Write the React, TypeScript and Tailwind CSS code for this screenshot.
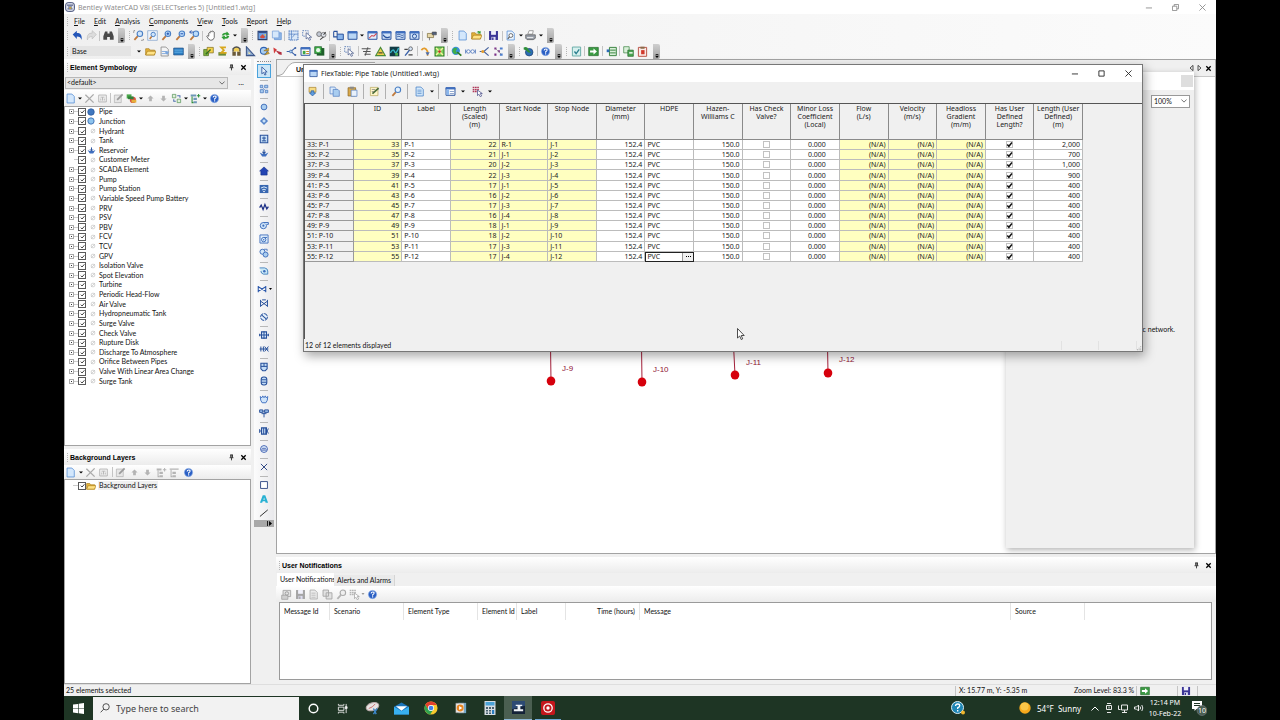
import React, { useState } from "react";
import type { ReactNode } from "react";

const NAVY = "#27509b";
const SKY = "#a9cdf0";
const GREY = "#b4b4b4";

const lens = (fill: string) => (
  <>
    <path d="M2 14.5 7 9" stroke="#c07a3c" strokeWidth="2.6" />
    <circle cx="10" cy="5.5" r="4" fill={fill} stroke="#4a7fc4" strokeWidth="1.6" />
  </>
);
const page = (fill: string, stroke: string) => (
  <path d="M3 1.5h7l3.5 3.5v9.5H3z" fill={fill} stroke={stroke} strokeWidth="1.2" />
);
const folder = (
  <>
    <path d="M1 13V4h5l1.5 2H14v7z" fill="#e6b53c" stroke="#a87b16" />
    <path d="M1 13 3.5 7.5H16L13.5 13z" fill="#ffe285" stroke="#a87b16" />
  </>
);
const disk = (c: string) => (
  <>
    <path d="M1.5 1.5h13v13h-13z" fill={c} />
    <path d="M4.5 1.5h7v5.5h-7z" fill="#f1f1fb" />
    <path d="M5 10h6v4.5H5z" fill="#dcdcf0" />
    <path d="M6 11h2v3.5H6z" fill={c} />
  </>
);
const win = (fill: string) => (
  <>
    <path d="M1.5 2.5h13v11h-13z" fill={fill} stroke={NAVY} strokeWidth="1.4" />
    <path d="M1 2h14v3H1z" fill="#3f6fc0" />
  </>
);

const ICONS: Record<string, ReactNode> = {
  undo: <path d="M1 6.5 7 1v3.5c5 0 8 2.500 7 10-1-3.500-3-5-7-5V13z" fill="#2456b8" />,
  redo: <path d="M15 6.500 9 1v3.500c-5 0-8 2.500-7 10 1-3.500 3-5 7-5V13z" fill="#dcdcdc" stroke="#bdbdbd" />,
  binoculars: (
    <path d="M3 2h3.500v3h3V2H13l2.500 7v5H10v-4H6v4H.5V9z" fill="#4a4a4a" />
  ),
  zoomSel: (
    <>
      {lens("#cfe4fa")}
      <path d="M1 4V1h3M12 15h3v-3" stroke="#555" strokeDasharray="2 1" fill="none" />
    </>
  ),
  zoomWin: (
    <>
      <path d="M1 1h14v14H1z" fill="#eef4fb" stroke="#7d9fc9" />
      <path d="M4 13l3-4" stroke="#c07a3c" strokeWidth="2.200" />
      <circle cx="9" cy="6.500" r="3.200" fill="#cfe4fa" stroke="#4a7fc4" strokeWidth="1.400" />
    </>
  ),
  zoomIn: (
    <>
      {lens("#bcdcfb")}
      <path d="M8 5.500h4M10 3.500v4" stroke="#1f4fae" strokeWidth="1.400" />
    </>
  ),
  zoomOut: (
    <>
      {lens("#bcdcfb")}
      <path d="M8 5.500h4" stroke="#1f4fae" strokeWidth="1.400" />
    </>
  ),
  zoomPrev: (
    <>
      {lens("#bcdcfb")}
      <path d="M1 3h6M3.500.500 1 3l2.500 2.500" stroke="#1f4fae" strokeWidth="1.300" fill="none" />
    </>
  ),
  hand: (
    <path d="M4 9V4.500q1-1.500 2 0V2.500q1-1.500 2 0v-.5q1-1.500 2 0v1q1-1.500 2 0V11q-1 4-5 4-3 0-6-6 1-1.500 3 0z" fill="#fff" stroke="#555" strokeWidth="1.200" />
  ),
  refresh: (
    <>
      <path d="M2.500 7.500Q4 3 9 4l1-2 4 4.500-5.500 2 .5-2Q6 6 5 8.500z" fill="#2f9e35" />
      <path d="M13.500 9Q12 13.500 7 12.500l-1 2-4-4.500 5.500-2-.5 2q3 .5 4-2z" fill="#2f9e35" />
    </>
  ),
  picture: (
    <>
      <path d="M1.500 2h13v12h-13z" fill="#6fa5e6" stroke="#2a3f6c" strokeWidth="1.500" />
      <path d="M2 2h12v2.500H2z" fill="#34508d" />
      <path d="M4 10l4-4 4 4-2 2H6z" fill="#d54d3d" />
      <path d="M10 6h3v3z" fill="#f4c744" />
    </>
  ),
  layers: (
    <>
      <path d="M5 4h10v10H5z" fill="#8fb7e8" stroke="#5f8fd0" />
      <path d="M2 1.500h9.500v10H2z" fill="#d6e8fb" stroke="#6f9ad6" />
    </>
  ),
  grid: (
    <>
      <path d="M1.500 1.500h13v13h-13z" fill="#dbe9f8" stroke="#4f7cc0" strokeDasharray="2 1" strokeWidth="1.500" />
      <path d="M5 1v14M1 6h14M10 6l-4 5" stroke="#4f7cc0" />
    </>
  ),
  selectArrow: (
    <>
      <path d="M1 1h8v8H1z" fill="none" stroke="#5c7fb8" strokeDasharray="2 1.500" strokeWidth="1.400" />
      <path d="M6 4v9l2.500-2 2 4 2-1-2-3.500H14z" fill="#fff" stroke="#3a4d80" />
    </>
  ),
  gauges: (
    <>
      <circle cx="4.500" cy="6" r="3.500" fill="#c3c9d4" stroke="#555" />
      <circle cx="11" cy="7" r="3.500" fill="#dfe3ea" stroke="#555" />
      <path d="M11 7l3-4M6 14l5-4" stroke="#444" strokeWidth="1.500" />
    </>
  ),
  flex: (
    <>
      <path d="M6 6h9v8H6z" fill="#8ab6ec" stroke={NAVY} strokeWidth="1.400" />
      <path d="M1 2h5v4M1 2v8h5" stroke={NAVY} strokeWidth="1.500" fill="none" />
    </>
  ),
  window: win("#b9d6f5"),
  graph: (
    <>
      {win("#e4effb")}
      <path d="M3 12l4-4 3 1 4-4" stroke="#cf3f4a" strokeWidth="1.500" fill="none" />
    </>
  ),
  profile: (
    <>
      {win("#cfe2f8")}
      <path d="M3 7q3 6 10 3" stroke={NAVY} strokeWidth="1.700" fill="none" />
    </>
  ),
  contour: (
    <>
      {win("#cfe2f8")}
      <path d="M3 7q3-2 5 0t5 0M3 10q3-2 5 0t5 0" stroke={NAVY} strokeWidth="1.200" fill="none" />
    </>
  ),
  network: (
    <>
      {win("#cfe2f8")}
      <circle cx="8" cy="9" r="3" fill="none" stroke={NAVY} strokeWidth="1.400" />
    </>
  ),
  sign: (
    <>
      <path d="M2 5h9v6H2z" fill="#e6d7a8" stroke="#7b6a3a" />
      <path d="M5 11v4M9 3h6v4H9z" stroke="#4f4f4f" fill="#50607e" />
    </>
  ),
  newDoc: page("#d3e7fc", "#5e93d6"),
  openFolder: (
    <>
      {folder}
      <path d="M8 4q2-4 5-2l1-1v4h-4l1-1.500Q10 2.500 8 4z" fill="#2f9e35" />
    </>
  ),
  folder,
  save: disk("#3b3596"),
  saveGrey: disk("#a5a5a5"),
  preview: (
    <>
      {page("#eaf4ff", "#5e93d6")}
      <circle cx="8.500" cy="8" r="2.800" fill="#fff" stroke="#555" strokeWidth="1.200" />
      <path d="M6.500 10 4 13" stroke="#555" strokeWidth="1.500" />
    </>
  ),
  printer: (
    <>
      <path d="M4 6l2-5h6l-1 5z" fill="#fff" stroke="#777" />
      <path d="M1 7h14v5l-3 2H3l-2-2z" fill="#9aa0aa" stroke="#555" />
      <path d="M3 11h9" stroke="#e9e9e9" strokeWidth="1.500" />
    </>
  ),
  scenario: (
    <>
      {page("#f4f4f4", "#888")}
      <path d="M4 8h8M4 11h8" stroke="#5e93d6" />
      <path d="M8 8h7l-3 5z" fill="#7aa6dd" />
    </>
  ),
  screen: (
    <>
      <path d="M1 3h14v10H1z" fill="#2b7fc4" stroke="#1b4a82" />
      <path d="M2 6h12M2 9h12" stroke="#7fc1ef" />
    </>
  ),
  multi: (
    <>
      <path d="M1 5h7v9H1z" fill="#7fb23d" stroke="#4a6a1c" />
      <path d="M6 2h9v8H6z" fill="#f5d24d" stroke="#7b6a1a" />
      <path d="M4 12l7-7" stroke="#2f6e22" strokeWidth="2" />
    </>
  ),
  sigma: (
    <>
      <path d="M2 9h11v5H2z" fill="#6a8b3a" />
      <path d="M13 2H6l4 4-4 4h8" stroke="#d8a71d" strokeWidth="2.500" fill="none" />
    </>
  ),
  locks: (
    <>
      <path d="M2 8h5v6H2zM9 8h5v6H9z" fill="#6a5a3a" />
      <path d="M3 8V4q5-5 10 0v4" stroke="#4f4f4f" strokeWidth="2" fill="#f0ce58" />
    </>
  ),
  ruler: (
    <>
      <path d="M2 1v13h12z" fill="#8aa7cf" stroke="#3c5688" strokeWidth="1.500" />
      <path d="M5 8v3.500h3.500z" fill="#f5e9ae" />
    </>
  ),
  pump: (
    <>
      <circle cx="7" cy="7" r="5" fill="#a9cdf0" stroke="#2f63b3" strokeWidth="1.500" />
      <path d="M7 7l7-4v4zM8 13l5-5 2 3z" fill="#e1a82a" stroke="#7c5b12" strokeWidth=".7" />
    </>
  ),
  valve: (
    <>
      <path d="M2 2l5 3-4 6z" fill="#d33c3c" />
      <path d="M5 6l5 2 4 1v4l-4-1z" fill="#b32f3f" />
    </>
  ),
  branch: (
    <>
      <path d="M1 8h6l6-5M7 8l6 5" stroke="#3c63a9" strokeWidth="1.500" fill="none" />
      <circle cx="7" cy="8" r="2" fill={SKY} stroke="#3c63a9" />
      <circle cx="13.500" cy="3" r="1.500" fill="#3c63a9" />
      <circle cx="13.500" cy="13" r="1.500" fill="#3c63a9" />
    </>
  ),
  tableGreen: (
    <>
      {win("#fff")}
      <path d="M4 7h4v5H4z" fill="#3fa646" />
      <path d="M9 8h4M9 11h4" stroke="#c98a2a" strokeWidth="1.500" />
    </>
  ),
  greenBlock: (
    <>
      <path d="M4 3h11v11H4z" fill="#1f5f2a" />
      <path d="M1 1h10v10H1z" fill="#3fae48" stroke="#1f5f2a" />
      <circle cx="6" cy="6" r="3" fill="#e8f7e9" />
    </>
  ),
  slopes: (
    <path d="M1 4h13M3 8h11M5 12h9M10 2l-4 12" stroke="#555" strokeWidth="1.600" fill="none" />
  ),
  triangle: (
    <>
      <path d="M8 2l7 12H1z" fill="#f0cf4b" stroke="#4a8b3a" strokeWidth="1.500" />
      <path d="M5 10h6" stroke="#333" strokeWidth="1.500" />
    </>
  ),
  tile: (
    <>
      <path d="M1 1h14v14H1z" fill="#113b45" />
      <path d="M2 10q4-7 6-2t6-5" stroke="#39b7c9" strokeWidth="2" fill="none" />
      <path d="M9 10h4v4H9z" fill="#4caf50" />
    </>
  ),
  tools: (
    <>
      <path d="M3 14 11 4" stroke="#3c63a9" strokeWidth="2" />
      <circle cx="11" cy="4" r="2.800" fill="#d6e4f6" stroke="#444" />
      <path d="M2 5h5M8 13h6" stroke="#444" strokeWidth="1.800" />
    </>
  ),
  bend: (
    <>
      <path d="M2 6q5-6 9 2v6" stroke="#e39b2a" strokeWidth="2.500" fill="none" />
      <path d="M8 9h6l-3 5z" fill="#4c6fae" />
    </>
  ),
  cross: (
    <>
      <path d="M1.500 1.500h13v13h-13z" fill="#7ccf5a" stroke="#2c7a22" strokeWidth="1.500" />
      <path d="M3 3l10 10M13 3 3 13" stroke="#f7f4a0" strokeWidth="2" />
      <circle cx="8" cy="8" r="2" fill="#c0392b" />
    </>
  ),
  globe: (
    <>
      <circle cx="7" cy="7" r="6" fill="#3a8fd8" />
      <path d="M3 4q4-3 6 0l-2 3 2 4-4 1-3-4z" fill="#3fae48" />
      <path d="M9 9l6 5" stroke="#2c7a22" strokeWidth="2.500" />
    </>
  ),
  chain: (
    <>
      <path d="M1 5v6M15 5v6M1 8h14" stroke="#5a7fc0" strokeWidth="1.500" />
      <circle cx="5" cy="8" r="2.500" fill="#fff" stroke="#5a7fc0" strokeWidth="1.300" />
      <circle cx="11" cy="8" r="2.500" fill="#fff" stroke="#5a7fc0" strokeWidth="1.300" />
    </>
  ),
  fork: (
    <>
      <path d="M14 2 7 8l7 6M1 8h6" stroke="#44609c" strokeWidth="1.700" fill="none" />
      <circle cx="5.500" cy="8" r="2.200" fill="#e39b2a" />
    </>
  ),
  dots: (
    <>
      <path d="M2 2h3v3H2zM2 11h3v3H2zM7 6h3v3H7z" fill="#7a2d86" />
      <path d="M10 2h4v3h-4zM10 11h4v3h-4z" fill="#4c7fd0" />
      <path d="M4 4l8 8" stroke="#888" />
    </>
  ),
  world: (
    <>
      <circle cx="9" cy="9" r="5.500" fill="#2d6db5" stroke="#1d3f6c" />
      <path d="M1 2q5-2 7 3l4 5-5-1Q5 5 1 5z" fill="#2f8e3a" />
    </>
  ),
  help: (
    <>
      <circle cx="8" cy="8" r="6" fill="#2a5fc4" stroke="#8fb0e6" />
      <path d="M6 6.500q0-2.200 2.200-2.200t2.100 1.900Q10.200 7.500 8.200 8.500v1.200M8.200 10.700v1.500" stroke="#fff" strokeWidth="1.600" fill="none" />
    </>
  ),
  checkDoc: (
    <>
      <path d="M2 1.500h12v13H2z" fill="#d6f0ee" stroke="#5fa7a3" strokeWidth="1.300" />
      <path d="M5 8l2.500 3L12 5" stroke="#2d7f8f" strokeWidth="2" fill="none" />
    </>
  ),
  go: (
    <>
      <path d="M1 2h14v12H1z" fill="#3b9a43" stroke="#23692a" />
      <path d="M3 6.500h5V3.500L13 8l-5 4.500v-3H3z" fill="#fff" />
    </>
  ),
  listGreen: (
    <>
      <path d="M5 2h10v12H5z" fill="#d9efd9" stroke="#37823d" strokeWidth="1.400" />
      <path d="M6 6h8M6 10h8" stroke="#37823d" strokeWidth="1.400" />
      <path d="M1 5h4v4H1z" fill="#2b6cb5" />
    </>
  ),
  copyGreen: (
    <>
      <path d="M1 1h8v9H1z" fill="#d9efd9" stroke="#37823d" />
      <path d="M7 6h8v9H7z" fill="#4ba552" stroke="#23692a" />
      <path d="M9 10h5" stroke="#fff" strokeWidth="2" />
    </>
  ),
  clip: (
    <>
      <path d="M2 2h12v13H2z" fill="#fbe9e6" stroke="#b85245" strokeWidth="1.400" />
      <path d="M5 1h6v3H5z" fill="#8b6b4a" />
      <path d="M6 6h5v6H6z" fill="#d0392b" />
    </>
  ),
  del: <path d="M2 2.500 14 14M14 2 2 14" stroke="#ababab" strokeWidth="2" />,
  rename: (
    <path d="M2.500 3h11v10h-11zM5 6h6M8 6v5M5.500 11V8M10.500 11V8" fill="none" stroke="#b5b5b5" strokeWidth="1.400" />
  ),
  editGrey: (
    <>
      <path d="M2 3h10v11H2z" fill="#e6e6e6" stroke="#b0b0b0" />
      <path d="M6 10l8-8" stroke="#9b9b9b" strokeWidth="2.500" />
    </>
  ),
  edit: (
    <>
      <path d="M2 2h11v12H2z" fill="#fff6c9" stroke="#b4a55a" />
      <path d="M5 11l9-8" stroke="#4c6e3a" strokeWidth="2.500" />
      <path d="M4 5h5M4 8h3" stroke="#777" />
    </>
  ),
  symbology: (
    <>
      <path d="M1 2h7v6H1z" fill="#4aa84a" />
      <circle cx="10" cy="10" r="4.500" fill="#d85040" />
      <path d="M8 10h7v4H8z" fill="#e5b13c" />
      <path d="M3 5h8v4H3z" fill="#2f7f3a" />
    </>
  ),
  up: <path d="M8 3.500l4.500 4.500H10v4H6V8H3.500z" fill={GREY} />,
  down: <path d="M8 12.500l4.500-4.500H10V4H6v4H3.500z" fill={GREY} />,
  swap: (
    <>
      <path d="M2 2h5v5H2zM9 9h5v5H9z" fill="#dff0da" stroke="#4f8f52" />
      <path d="M9 4h4v3M7 12H4V9" stroke="#4f6fae" strokeWidth="1.500" fill="none" />
    </>
  ),
  treeAdd: (
    <>
      <path d="M1 2h8v3H1zM5 7h5v3H5zM5 12h5v3H5z" fill="#6f97b8" />
      <path d="M3 5v9h2M10 4h5M12.500 1.500v5" stroke="#2f8e3a" strokeWidth="1.500" fill="none" />
    </>
  ),
  treeAddGrey: (
    <>
      <path d="M1 2h7v3H1zM5 7h5v3H5zM5 12h5v3H5z" fill={GREY} />
      <path d="M3 5v9h2M10 4h5M12.500 1.500v5" stroke={GREY} strokeWidth="1.500" fill="none" />
    </>
  ),
  treeGrey: (
    <>
      <path d="M1 2h13v2H1zM5 7h5v3H5zM5 12h5v3H5z" fill={GREY} />
      <path d="M3 4v10h2" stroke={GREY} strokeWidth="1.500" fill="none" />
    </>
  ),
  exportDown: (
    <>
      <path d="M3 2h10v7H3z" fill="#f6dc85" stroke="#a9802a" />
      <path d="M6 7h4v3h2.500L8 14.500 3.500 10H6z" fill="#5c9ce0" stroke="#2f5f9c" />
    </>
  ),
  copy: (
    <>
      <path d="M1.500 1.500h7l1.500 2v8H1.500z" fill="#dcebfb" stroke="#4f7cc0" />
      <path d="M6 5h7l2 2v8H6z" fill="#a9cdf0" stroke="#4f7cc0" />
    </>
  ),
  paste: (
    <>
      <path d="M1.500 2.500h11v12h-11z" fill="#d9a94a" stroke="#8b6420" />
      <path d="M4 1h6v3H4z" fill="#8a8a8a" />
      <path d="M6 6h8.500v9H6z" fill="#e8f1fb" stroke="#4f7cc0" />
    </>
  ),
  find: lens("#e4f1fd"),
  report: (
    <>
      {page("#d4e9fb", "#4f86c8")}
      <path d="M5 6h6M5 8.500h6M5 11h6" stroke="#4f86c8" />
    </>
  ),
  tableOpt: (
    <>
      {win("#fff")}
      <path d="M2 5h4v8H2z" fill="#8ab6ec" />
      <path d="M7 8h6M7 11h6" stroke="#5c7fb8" />
    </>
  ),
  selRows: (
    <>
      <path d="M1 2h9M1 5h9M1 8h6" stroke="#b03a5b" strokeWidth="2" strokeDasharray="2.500 .8" />
      <path d="M8 6v8l2-2 2 3.500 2-1-2-3.500h3z" fill="#fff" stroke="#3a3f80" />
    </>
  ),
  greyDoc: (
    <>
      {page("#ececec", "#ababab")}
      <path d="M5 6h6M5 9h6M5 12h6" stroke="#ababab" />
    </>
  ),
  greyCopy: (
    <path d="M1.500 1.500h8v9h-8zM6 5.500h8.500v9H6z" fill="#e2e2e2" stroke="#a5a5a5" strokeWidth="1.300" />
  ),
  greyFind: (
    <>
      <path d="M2 14.500 7 9" stroke="#b5b5b5" strokeWidth="2.600" />
      <circle cx="10" cy="5.500" r="4" fill="#efefef" stroke="#aaa" strokeWidth="1.600" />
    </>
  ),
  greySel: (
    <>
      <path d="M1 2h9M1 5h9M1 8h6" stroke="#b5b5b5" strokeWidth="2" strokeDasharray="2.500 .8" />
      <path d="M8 6v8l2-2 2 3.500 2-1-2-3.500h3z" fill="#fff" stroke="#999" />
    </>
  ),
  greyEdit: (
    <>
      <path d="M3 2h11v9H3z" fill="#e2e2e2" stroke="#a5a5a5" strokeWidth="1.300" />
      <path d="M1 9h9v6H1z" fill="#cfcfcf" stroke="#999" />
      <circle cx="8.500" cy="6.500" r="2.500" fill="none" stroke="#999" strokeWidth="1.300" />
    </>
  ),
  pointer: <path d="M4.500 1.500v11l2.800-2.300 2 4.300 2-1-2-4h3.700z" fill="#eaf3fc" stroke={NAVY} strokeWidth="1.300" />,
  layout: (
    <>
      <path d="M2 2h4v4H2zM9 2h5v4H9zM2 9h5v5H2zM10 10h4v4h-4z" fill={SKY} stroke="#4f7cc0" strokeWidth="1.300" />
      <path d="M6 6l4 4" stroke="#4f7cc0" />
    </>
  ),
  junction: <circle cx="8" cy="8" r="4.600" fill={SKY} stroke="#4673bd" strokeWidth="1.600" />,
  hydrant: (
    <>
      <path d="M8 1.500 14.500 8 8 14.500 1.500 8z" fill="#5d8cd0" />
      <circle cx="8" cy="8" r="3.200" fill="#c9e2f8" stroke="#3b68b3" />
    </>
  ),
  tank: (
    <>
      <path d="M2 2h12v12H2z" fill="#c9e2f8" stroke={NAVY} strokeWidth="1.700" />
      <path d="M4.500 11h7M5 6.500h6M8 4v7" stroke={NAVY} strokeWidth="1.600" />
    </>
  ),
  reservoir: (
    <>
      <path d="M1 7l4 2h6l4-2-4 6.500H5z" fill="#3f6fc0" />
      <path d="M8 2.500v6M5.500 6 8 9l2.500-3" stroke={NAVY} strokeWidth="1.700" fill="none" />
    </>
  ),
  meter: <path d="M8 1.500 15 8h-2v6.500H3V8H1z" fill="#2344b4" stroke="#14308c" />,
  scada: (
    <>
      <path d="M1 1.500h14v13H1z" fill="#3867b0" />
      <path d="M3 6.500q5-4 10 0M5 9.500q3-2.500 6 0" stroke="#d9ebfc" strokeWidth="1.600" fill="none" />
      <circle cx="8" cy="12" r="1.300" fill="#fff" />
    </>
  ),
  wave: <path d="M1 9l2.500-4 3 7L9.500 4l3 7L15 7.500" stroke="#1b2f86" strokeWidth="2" fill="none" />,
  pumpBlue: (
    <>
      <circle cx="7" cy="9" r="5" fill="#d2e7fa" stroke="#3d6dbb" strokeWidth="1.500" />
      <path d="M7 4h8v3h-3" fill="#d2e7fa" stroke="#3d6dbb" strokeWidth="1.500" />
      <circle cx="7" cy="9" r="1.700" fill="#3d6dbb" />
    </>
  ),
  pumpBox: (
    <>
      <path d="M1.500 1.500h13v13h-13z" fill="#dfeefc" stroke="#3d6dbb" strokeWidth="1.400" />
      <circle cx="7.500" cy="9" r="3.500" fill="none" stroke="#3d6dbb" strokeWidth="1.500" />
      <path d="M7.500 5.500H13" stroke="#3d6dbb" strokeWidth="1.500" />
      <circle cx="7.500" cy="9" r="1.200" fill="#3d6dbb" />
    </>
  ),
  battery: (
    <>
      <circle cx="5.500" cy="6" r="4" fill="#d2e7fa" stroke="#3d6dbb" strokeWidth="1.500" />
      <circle cx="10.500" cy="10.500" r="4" fill="#a9cdf0" stroke="#3d6dbb" strokeWidth="1.500" />
      <path d="M8 2h5v3" stroke="#3d6dbb" strokeWidth="1.300" fill="none" />
    </>
  ),
  turbine: (
    <>
      <path d="M1 3h8q5 1 5 5v5H7q-4-1-4-5" fill="#c9e8f6" stroke="#3d7dbb" strokeWidth="1.400" />
      <circle cx="8.500" cy="8.500" r="2" fill="#3d6dbb" />
    </>
  ),
  bowtie: <path d="M2 3v10M14 3v10M2 4.500l12 7M14 4.500l-12 7" stroke="#2c59ac" strokeWidth="1.700" fill="none" />,
  isoValve: (
    <>
      <path d="M2.500 3v11M13.500 3v11M2.500 13l11-8M2.500 5l11 8" stroke={NAVY} strokeWidth="1.600" fill="none" />
      <path d="M5 3h6" stroke={NAVY} strokeWidth="1.600" />
    </>
  ),
  checkValve: (
    <>
      <circle cx="8" cy="8" r="5.500" fill="#e4f0fc" stroke={NAVY} strokeWidth="1.600" strokeDasharray="7 1.500" />
      <path d="M4.500 5l7 6" stroke={NAVY} strokeWidth="1.700" />
    </>
  ),
  orifice: (
    <>
      <path d="M4 3h8v10H4z" fill="#d6e8fb" stroke={NAVY} strokeWidth="1.700" />
      <path d="M1 6v4M15 6v4M1 8h14M8 2v12" stroke={NAVY} strokeWidth="1.600" />
    </>
  ),
  twin: <path d="M1 8h14M3 4v8M7 4v8M9 4l6 8M15 4l-6 8" stroke={NAVY} strokeWidth="1.600" fill="none" />,
  surge: (
    <>
      <path d="M3 2h10v9l-3 3H6l-3-3z" fill="#c3dcf6" stroke={NAVY} strokeWidth="1.700" />
      <path d="M3 7h10M8 2v5" stroke={NAVY} strokeWidth="1.600" />
    </>
  ),
  hydro: (
    <>
      <rect x="3.500" y="1.500" width="9" height="13" rx="4" fill="#c3dcf6" stroke={NAVY} strokeWidth="1.700" />
      <path d="M3.500 6h9M3.500 10h9" stroke={NAVY} strokeWidth="1.500" />
    </>
  ),
  air: (
    <path d="M2 4l2.500 2L6 3l2 3 2-3 1.500 3L14 4q0 7-3 10H5Q2 11 2 4z" fill="#cfe4fa" stroke="#3f6fc0" strokeWidth="1.500" />
  ),
  rupture: <path d="M1 3h5v4H1zM9 3h6v4H9zM6 5h3M8 7v8M4 9h8" fill="#9fc2ec" stroke={NAVY} strokeWidth="1.500" />,
  discharge: (
    <>
      <path d="M4 3h8v10H4z" fill="#d6e8fb" stroke={NAVY} strokeWidth="1.700" />
      <path d="M1 5v6M15 4l-2 4 2 4M1 8h3M7 3v10M10 3v10" stroke={NAVY} strokeWidth="1.500" fill="none" />
    </>
  ),
  ring: (
    <>
      <circle cx="8" cy="8" r="5.500" fill="#e4f0fc" stroke="#4060b0" strokeWidth="1.500" />
      <path d="M4 10l2.500-4L8 9l1.500-3 2.500 4z" fill="#fff" stroke="#4060b0" strokeWidth="1.200" />
    </>
  ),
  xMark: <path d="M3 3l10 10M13 3 3 13" stroke="#27407f" strokeWidth="1.500" />,
  box: <path d="M2.500 2.500h11v11h-11z" fill="#fff" stroke="#27407f" strokeWidth="1.400" />,
  textA: <path d="M1.500 14 6 2h4l4.500 12h-4l-.7-2.500H6L5 14zM7 9h2.200L8.200 5.500z" fill="#27b1d3" />,
  line: <path d="M1.500 13.500 14 3" stroke="#333" strokeWidth="1.600" />,
  pin: <path d="M5 2h6M6 2v6M10 2v6M9 2v6M3.500 8.500h9M8 8.500v6" stroke="#111" strokeWidth="1.700" fill="none" />,
  close: <path d="M3 3l10 10M13 3 3 13" stroke="#000" strokeWidth="3" />,
  none: (
    <>
      <circle cx="8" cy="8" r="5" stroke="#b5b5b5" strokeWidth="1.500" />
      <path d="M3 13 13 3" stroke="#b5b5b5" strokeWidth="1.500" />
    </>
  ),
  pipeDot: <circle cx="8" cy="8" r="6.500" fill="#3f77bf" stroke="#2a579c" strokeWidth="1.500" />,
  juncDot: <circle cx="8" cy="8" r="6.300" fill="#8ec4ee" stroke="#3568b0" strokeWidth="1.700" />,
};

type IconProps = { name: string; big?: boolean };
const Icon = ({ name, big }: IconProps) => (
  <svg viewBox="0 0 16 16" fill="none" aria-hidden="true" className={big ? "size-[11px] shrink-0" : "size-[10px] shrink-0"}>
    {ICONS[name]}
  </svg>
);

const Grip = () => (
  <span className="flex w-[6px] shrink-0 flex-col items-center gap-[1px]">
    {[0, 1, 2, 3, 4].map((i) => (
      <span key={i} className="size-[1px] bg-[#b5b5b5]" />
    ))}
  </span>
);
const Caret = () => (
  <svg viewBox="0 0 6 4" aria-hidden="true" className="h-[3px] w-[4px] shrink-0">
    <path d="M0 .5h6L3 3.500z" fill="#000" />
  </svg>
);
const Sep = () => <span className="h-[10px] w-[1px] shrink-0 bg-[#c4c4c4]" />;
const Overflow = () => (
  <button type="button" aria-label="Toolbar options" className="ml-[3px] flex h-[15px] w-[7px] shrink-0 flex-col items-center justify-end rounded-r-[2px] bg-gradient-to-b from-[#cfcfcf] to-[#a2a2a2] pb-[1px]">
    <svg viewBox="0 0 6 6" aria-hidden="true" className="size-[4px]">
      <path d="M1 0h4v1H1zM0 2.500h6L3 6z" fill="#000" />
    </svg>
  </button>
);

const Items = ({ list, fixed }: { list: string; fixed?: boolean }) => (
  <>
    {list.split(" ").map((n, i) => {
      if (n === "|") return <span key={i} className="flex w-[3px] shrink-0 justify-center"><Sep /></span>;
      if (n === "v") return <span key={i} className="flex w-[6px] shrink-0 justify-center"><Caret /></span>;
      if (n === ":") return <Grip key={i} />;
      if (n === ">") return <Overflow key={i} />;
      return (
        <button key={i} type="button" aria-label={n} className={fixed ? "flex w-[13px] shrink-0 items-center justify-center" : "flex min-w-0 flex-1 items-center justify-center"}>
          <Icon name={n} big />
        </button>
      );
    })}
  </>
);

const Check = ({ label, defaultChecked, variant }: { label: string; defaultChecked: boolean; variant: "tree" | "grid" }) => {
  const [on, setOn] = useState(defaultChecked);
  const tree = variant === "tree";
  return (
    <span className="inline-grid shrink-0 place-items-center">
      <input
        type="checkbox"
        aria-label={label}
        checked={on}
        onChange={() => setOn(!on)}
        className={
          tree
            ? "col-start-1 row-start-1 size-[8px] appearance-none border border-[#5a5a5a] bg-white"
            : "col-start-1 row-start-1 size-[7px] appearance-none border border-[#c2c2c2] bg-white"
        }
      />
      {on && (
        <svg viewBox="0 0 8 8" aria-hidden="true" className="pointer-events-none col-start-1 row-start-1 size-[7px]">
          <path d={tree ? "M2 4.200 3.500 5.700 6.200 2.600" : "M1.500 4 3.300 6 6.800 1.800"} fill="none" stroke="#111" strokeWidth={tree ? ".9" : "1.700"} />
        </svg>
      )}
    </span>
  );
};

const TREE: [string, string][] = [
  ["Pipe", "pipeDot"], ["Junction", "juncDot"], ["Hydrant", "none"], ["Tank", "none"], ["Reservoir", "reservoir"],
  ["Customer Meter", "none"], ["SCADA Element", "none"], ["Pump", "none"], ["Pump Station", "none"],
  ["Variable Speed Pump Battery", "none"], ["PRV", "none"], ["PSV", "none"], ["PBV", "none"], ["FCV", "none"],
  ["TCV", "none"], ["GPV", "none"], ["Isolation Valve", "none"], ["Spot Elevation", "none"], ["Turbine", "none"],
  ["Periodic Head-Flow", "none"], ["Air Valve", "none"], ["Hydropneumatic Tank", "none"], ["Surge Valve", "none"],
  ["Check Valve", "none"], ["Rupture Disk", "none"], ["Discharge To Atmosphere", "none"],
  ["Orifice Between Pipes", "none"], ["Valve With Linear Area Change", "none"], ["Surge Tank", "none"],
];

const PIPES: [number, string, number, string, string, string][] = [
  [33, "P-1", 22, "R-1", "J-1", "2,000"], [35, "P-2", 21, "J-1", "J-2", "700"], [37, "P-3", 20, "J-2", "J-3", "1,000"],
  [39, "P-4", 22, "J-3", "J-4", "900"], [41, "P-5", 17, "J-1", "J-5", "400"], [43, "P-6", 16, "J-2", "J-6", "400"],
  [45, "P-7", 17, "J-3", "J-7", "400"], [47, "P-8", 16, "J-4", "J-8", "400"], [49, "P-9", 18, "J-1", "J-9", "400"],
  [51, "P-10", 18, "J-2", "J-10", "400"], [53, "P-11", 17, "J-3", "J-11", "400"], [55, "P-12", 17, "J-4", "J-12", "400"],
];

const HEADS: string[][] = [
  [], ["ID"], ["Label"], ["Length", "(Scaled)", "(m)"], ["Start Node"], ["Stop Node"], ["Diameter", "(mm)"], ["HDPE"],
  ["Hazen-", "Williams C"], ["Has Check", "Valve?"], ["Minor Loss", "Coefficient", "(Local)"], ["Flow", "(L/s)"],
  ["Velocity", "(m/s)"], ["Headloss", "Gradient", "(m/m)"], ["Has User", "Defined", "Length?"], ["Length (User", "Defined)", "(m)"],
];

const PALETTE =
  "pointer | layout | junction hydrant | tank reservoir | meter | scada | wave | pumpBlue pumpBox battery | turbine | bowtie isoValve checkValve | orifice twin | surge hydro | air rupture | discharge | ring | xMark | box textA line";

const PanelHead = ({ title }: { title: string }) => (
  <div className="flex h-[16px] items-center bg-gradient-to-b from-white to-[#ececec] pr-[2px]">
    <Grip />
    <h2 className="font-['Liberation_Sans',Arial,sans-serif] text-[7px] font-bold text-black">{title}</h2>
    <button type="button" aria-label={"Pin " + title} className="ml-auto flex w-[12px] justify-center">
      <svg viewBox="0 0 16 16" aria-hidden="true" className="size-[7px]">{ICONS.pin}</svg>
    </button>
    <button type="button" aria-label={"Close " + title} className="flex w-[12px] justify-center">
      <svg viewBox="0 0 16 16" aria-hidden="true" className="size-[7px]">{ICONS.close}</svg>
    </button>
  </div>
);

const WinButtons = ({ restore, color }: { restore?: boolean; color: string }) => (
  <div className="flex h-full items-center" style={{ color }}>
    <button type="button" aria-label="Minimize" className="flex w-[27px] justify-center">
      <svg viewBox="0 0 8 8" className="size-[7px]" stroke="currentColor" fill="none"><path d="M1 4.500h7" /></svg>
    </button>
    <button type="button" aria-label="Maximize" className="flex w-[27px] justify-center">
      <svg viewBox="0 0 8 8" className="size-[7px]" stroke="currentColor" fill="none">
        {restore ? <path d="M.5 2.500h5v5h-5zM2.500 2.500v-2h5v5h-2" /> : <path d="M1 1h6v6H1z" />}
      </svg>
    </button>
    <button type="button" aria-label="Close" className="flex w-[27px] justify-center">
      <svg viewBox="0 0 8 8" className="size-[7px]" stroke="currentColor" fill="none"><path d="M.5.500l7 7M7.500.500l-7 7" /></svg>
    </button>
  </div>
);

const cell = "overflow-hidden border-r border-b border-[#bcbcbc] px-[2px] whitespace-nowrap leading-[9px]";

const PipeTable = () => (
  <table className="h-[158px] w-[778px] table-fixed border-separate border-spacing-0 font-['Noto_Sans','Open_Sans',sans-serif] text-[7px] leading-[8px] text-[#222]">
    <thead>
      <tr className="h-[36px]">
        {HEADS.map((h, i) => (
          <th key={i} scope="col" className="border-r border-b border-[#8a8a8a] bg-[#f0f0f0] p-0 pt-[1px] text-center align-top font-normal">
            {h.map((t) => (
              <span key={t} className="block whitespace-nowrap">{t}</span>
            ))}
          </th>
        ))}
      </tr>
    </thead>
    <tbody>
      {PIPES.map(([id, label, len, a, b, user], i) => {
        const last = i === PIPES.length - 1;
        return (
          <tr key={id} className="bg-white">
            <th scope="row" className="overflow-hidden border-r border-b border-[#9a9a9a] bg-[#f0f0f0] px-[2px] py-0 text-left leading-[9px] font-normal whitespace-nowrap">{id}: {label}</th>
            <td className={cell + " bg-[#ffffc0] text-right"}>{id}</td>
            <td className={cell}>{label}</td>
            <td className={cell + " bg-[#ffffc0] text-right"}>{len}</td>
            <td className={cell + " bg-[#ffffc0]"}>{a}</td>
            <td className={cell + " bg-[#ffffc0]"}>{b}</td>
            <td className={cell + " text-right"}>152.4</td>
            {last ? (
              <td className="overflow-hidden border border-[#222] p-0 leading-[8px] whitespace-nowrap">
                <div className="flex items-center justify-between pl-[1px]">
                  <span>PVC</span>
                  <button type="button" aria-label="Edit material" className="flex h-[8px] w-[11px] items-center justify-center gap-[1px] border-l border-[#999] bg-[#f0f0f0]">
                    <span className="size-[1px] bg-black" />
                    <span className="size-[1px] bg-black" />
                    <span className="size-[1px] bg-black" />
                  </button>
                </div>
              </td>
            ) : (
              <td className={cell}>PVC</td>
            )}
            <td className={cell + " text-right"}>150.0</td>
            <td className={cell + " text-center"}><span className="flex justify-center"><Check variant="grid" label={label + " has check valve"} defaultChecked={false} /></span></td>
            <td className="overflow-hidden border-r border-b border-[#bcbcbc] py-0 pr-[13px] pl-0 text-right leading-[9px]">0.000</td>
            <td className={cell + " bg-[#ffffc0] text-right"}>(N/A)</td>
            <td className={cell + " bg-[#ffffc0] text-right"}>(N/A)</td>
            <td className={cell + " bg-[#ffffc0] text-right"}>(N/A)</td>
            <td className={cell + " text-center"}><span className="flex justify-center"><Check variant="grid" label={label + " has user defined length"} defaultChecked /></span></td>
            <td className={cell + " text-right"}>{user}</td>
          </tr>
        );
      })}
    </tbody>
  </table>
);

const BarLine = () => <span className="mx-[1px] h-[15px] w-[1px] bg-[#b0b0b0]" />;

const FlexTable = () => (
  <section aria-label="FlexTable" className="absolute top-[64px] right-[73px] left-[239px] flex h-[288px] flex-col border border-[#777] bg-[#f0f0f0] shadow-[2px_4px_10px_rgba(0,0,0,0.35)]">
    <header className="flex h-[17px] shrink-0 items-center bg-white pl-[5px]">
      <svg viewBox="0 0 16 16" aria-hidden="true" className="size-[9px]">{ICONS.window}</svg>
      <h1 className="ml-[3px] font-['Noto_Sans','Open_Sans',sans-serif] text-[7px] text-[#222]">FlexTable: Pipe Table (Untitled1.wtg)</h1>
      <div className="ml-auto h-full"><WinButtons color="#222" /></div>
    </header>
    <div className="flex h-[21px] shrink-0 items-center gap-[3px] pb-[2px] pl-[2px]">
      <Items fixed list="exportDown" />
      <BarLine />
      <span className="flex gap-[5px]"><Items fixed list="copy paste" /></span>
      <BarLine />
      <Items fixed list="edit" />
      <BarLine />
      <Items fixed list="find" />
      <BarLine />
      <span className="flex items-center gap-[4px] pl-[1px]"><Items fixed list="report" /><Caret /></span>
      <BarLine />
      <span className="flex items-center gap-[4px] pl-[1px]"><Items fixed list="tableOpt" /><Caret /></span>
      <span className="flex items-center gap-[4px] pl-[3px]"><Items fixed list="selRows" /><Caret /></span>
    </div>
    <div className="min-h-0 flex-1 overflow-hidden border-t border-l border-[#555]">
      <PipeTable />
    </div>
    <footer className="flex h-[12px] shrink-0 items-center justify-between pl-[1px] text-[#111]">
      <span>12 of 12 elements displayed</span>
      <span className="flex h-full items-center">
        <span className="h-[9px] w-[38px] border-x border-[#e2e2e2]" />
        <span className="h-[9px] w-[38px] border-r border-[#e2e2e2]" />
        <svg viewBox="0 0 6 6" aria-hidden="true" className="size-[5px] self-end"><path d="M4 0h1v1H4zM4 2h1v1H4zM2 2h1v1H2zM4 4h1v1H4zM2 4h1v1H2zM0 4h1v1H0z" fill="#999" /></svg>
      </span>
    </footer>
  </section>
);

const NODES: [number, number, number, number, string][] = [
  [550, 551, 381, 562, "J-9"], [641, 642, 382, 653, "J-10"], [733, 735, 375, 746, "J-11"], [827, 828, 373, 839, "J-12"],
];
const LABEL_Y = [371, 372, 365, 362];

const COLS: [string, string, string][] = [
  ["Message Id", "w-[50px]", "text-left"], ["Scenario", "w-[74px]", "text-left"], ["Element Type", "w-[74px]", "text-left"],
  ["Element Id", "w-[39px]", "text-right"], ["Label", "w-[49px]", "text-left"], ["Time (hours)", "w-[74px]", "text-right"],
  ["Message", "w-[371px]", "text-left"], ["Source", "w-[74px]", "text-left"], ["", "", "text-left"],
];

const App = () => (
  <div className="h-screen overflow-hidden bg-black px-[64px] font-['Lato','Liberation_Sans',sans-serif] text-[7px] leading-[9px] text-[#111]">
    <div className="relative flex h-full flex-col bg-[#f0f0f0]">
      <header className="flex h-[14px] shrink-0 items-center bg-white pl-[1px]">
        <svg viewBox="0 0 16 16" aria-hidden="true" className="size-[10px]">
          <rect x="1" y="1" width="14" height="14" rx="4" fill="#dfe3ee" stroke="#3a4570" strokeWidth="1.500" />
          <path d="M3 5h10M5 8h6M4 11h8" stroke="#3a4570" strokeWidth="1.600" />
          <path d="M7 8h3v3H7z" fill="#c9a53a" />
        </svg>
        <span className="ml-[3px] font-['Noto_Sans','Open_Sans',sans-serif] text-[7px] text-[#8d8d8d]">Bentley WaterCAD V8i (SELECTseries 5) [Untitled1.wtg]</span>
        <div className="ml-auto h-full"><WinButtons restore color="#8a8a8a" /></div>
      </header>

      <nav className="flex h-[14px] shrink-0 items-center gap-[9px] bg-gradient-to-r from-[#f0f0f0] to-[#fbfbfb]">
        <span className="flex items-center gap-[4px]">
          <Grip />
          <button type="button"><span className="underline">F</span>ile</button>
        </span>
        {["Edit", "Analysis", "Components", "View", "Tools", "Report", "Help"].map((m) => (
          <button key={m} type="button">
            <span className="underline">{m[0]}</span>{m.slice(1)}
          </button>
        ))}
      </nav>

      <div className="flex h-[15px] shrink-0 items-center bg-gradient-to-r from-[#f0f0f0] to-[#fbfbfb]">
        <div className="flex w-[61px] items-center"><Items list=": undo redo | binoculars >" /></div>
        <div className="flex w-[123px] items-center pl-[1px]"><Items list=": zoomSel zoomWin zoomIn zoomOut zoomPrev | hand refresh v >" /></div>
        <div className="flex w-[200px] items-center pl-[1px]"><Items list=": picture layers | grid selectArrow gauges | flex window v graph profile contour network | sign >" /></div>
        <div className="flex w-[106px] items-center pl-[1px]"><Items list=": newDoc openFolder | save | preview v printer v >" /></div>
      </div>

      <div className="flex h-[16px] shrink-0 items-center bg-gradient-to-r from-[#f0f0f0] to-[#fbfbfb]">
        <div className="flex w-[131px] items-center">
          <Grip />
          <button type="button" className="flex h-[11px] w-[74px] items-center">
            <span className="flex h-[10px] w-[61px] items-center bg-[#e4e4e4] pl-[2px]">Base</span>
            <span className="ml-[6px] flex"><Caret /></span>
          </button>
          <Items list="folder scenario screen >" />
        </div>
        <div className="flex w-[141px] items-center pl-[1px]"><Items list=": multi sigma locks ruler pump valve branch tableGreen greenBlock >" /></div>
        <div className="flex w-[179px] items-center pl-[1px]"><Items list=": selectArrow | slopes triangle tile tools | bend cross | globe chain fork dots >" /></div>
        <div className="flex w-[47px] items-center pl-[1px]"><Items list=": world | help >" /></div>
        <div className="flex w-[98px] items-center pl-[1px]"><Items list=": checkDoc | go | listGreen | copyGreen clip >" /></div>
      </div>

      <main className="flex min-h-0 flex-1">
        <aside className="flex w-[187px] shrink-0 flex-col">
          <PanelHead title="Element Symbology" />
          <div className="flex h-[15px] items-center justify-between pr-[7px] pl-[1px]">
            <div className="relative flex h-[12px] w-[163px] items-center">
              <select aria-label="Symbology definition" className="h-full w-full appearance-none border border-[#b8b8b8] bg-[#e6e6e6] px-[1px]">
                <option>&lt;default&gt;</option>
              </select>
              <svg viewBox="0 0 8 5" aria-hidden="true" className="pointer-events-none absolute right-[3px] h-[4px] w-[6px]"><path d="M.5.500 4 4 7.500.500" fill="none" stroke="#444" /></svg>
            </div>
            <button type="button" aria-label="Browse definitions" className="text-[8px]">...</button>
          </div>
          <div className="flex h-[16px] items-center bg-gradient-to-b from-white to-[#ececec]">
            <div className="flex w-[157px] items-center">
              <Items list="newDoc v del rename | editGrey symbology v up down swap v treeAdd v help" />
            </div>
          </div>
          <div className="min-h-0 flex-1 border border-[#a3a3a3] bg-white">
            <ul className="grid h-[279px] auto-rows-fr">
              {TREE.map(([label, icon]) => (
                <li key={label} className="flex items-center pl-[4px]">
                  {label === "Customer Meter" ? (
                    <span className="w-[5px]" />
                  ) : (
                    <button type="button" aria-label={"Expand " + label} className="flex size-[5px] shrink-0 items-center justify-center border border-[#aaa]">
                      <span className="size-[1px] bg-[#333]" />
                    </button>
                  )}
                  <span className="h-[1px] w-[4px] shrink-0 bg-[#ccc]" />
                  <Check variant="tree" label={label} defaultChecked />
                  <span className={icon === "none" ? "flex w-[13px] shrink-0 justify-center pl-[1px]" : "flex w-[13px] shrink-0 justify-start pl-[1px]"}>
                    <svg viewBox="0 0 16 16" fill="none" aria-hidden="true" className={icon === "none" ? "size-[6px]" : icon === "reservoir" ? "size-[9px]" : "size-[8px]"}>{ICONS[icon]}</svg>
                  </span>
                  <span className="whitespace-nowrap">{label}</span>
                </li>
              ))}
            </ul>
          </div>
          <div className="mt-[3px]"><PanelHead title="Background Layers" /></div>
          <div className="flex h-[14px] items-center bg-gradient-to-b from-white to-[#ececec]">
            <div className="flex w-[131px] items-center">
              <Items list="newDoc v del rename | editGrey up down treeAddGrey treeGrey help" />
            </div>
          </div>
          <div className="h-[205px] shrink-0 border border-[#a3a3a3] bg-white">
            <div className="flex h-[11px] items-center pl-[8px]">
              <span className="h-[1px] w-[5px] bg-[#ccc]" />
              <Check variant="tree" label="Background Layers" defaultChecked />
              <Icon name="folder" />
              <span className="ml-[2px] bg-[#f0f0f0] px-[1px]">Background Layers</span>
            </div>
          </div>
        </aside>

        <div className="flex w-[25px] shrink-0 flex-col items-end pr-[2px]">
          <div className="flex w-[20px] flex-col items-center bg-gradient-to-r from-[#fcfcfc] to-[#e9e9ec]">
            <span className="my-[2px] h-[1px] w-[14px] border-t border-dotted border-[#8a8a8a]" />
            {PALETTE.split(" ").map((n, i) =>
              n === "|" ? (
                <span key={i} className="flex h-[4px] items-center"><span className="h-[1px] w-[8px] bg-[#b8b8b8]" /></span>
              ) : (
                <button
                  key={i}
                  type="button"
                  aria-label={n}
                  className={n === "pointer" ? "flex h-[14px] w-[14px] items-center justify-center border border-[#4aa3dc] bg-[#cce6f7]" : "flex h-[14px] items-center justify-center gap-[2px]"}
                >
                  <Icon name={n} />
                  {n === "bowtie" && <svg viewBox="0 0 6 4" aria-hidden="true" className="h-[2px] w-[3px]"><path d="M0 0h6L3 4z" fill="#000" /></svg>}
                </button>
              )
            )}
            <button type="button" aria-label="Palette options" className="flex h-[7px] w-[20px] items-center justify-end bg-[#a9a9a9] pr-[2px]">
              <svg viewBox="0 0 6 6" aria-hidden="true" className="size-[5px]"><path d="M0 0h1v6H0zM2.500 0v6L6 3z" fill="#000" /></svg>
            </button>
          </div>
        </div>

        <div className="flex min-w-0 flex-1 flex-col">
          <section aria-label="Drawing" className="flex min-h-0 flex-1 flex-col border border-[#a3a3a3] bg-white">
            <div className="flex h-[17px] items-center justify-between border-b border-[#c8c8c8] bg-[#f0f0f0] pr-[3px]">
              <div className="flex h-full items-end">
                <svg viewBox="0 0 18 14" aria-hidden="true" className="h-[14px] w-[18px]"><path d="M0 14h2q4 0 7-6 4-7.500 9-7.500v14z" fill="#fff" /><path d="M0 13.500h2q4 0 7-6 4-7 9-7" fill="none" stroke="#aaa" /></svg>
                <span className="flex h-[14px] w-[80px] items-center border-t border-[#aaa] bg-white pl-[1px]">
                  <span className="w-[9px] overflow-hidden font-['Liberation_Sans',Arial,sans-serif] font-bold">Un</span>
                </span>
              </div>
              <div className="flex items-center gap-[3px]">
                <button type="button" aria-label="Previous tab"><svg viewBox="0 0 6 8" className="h-[6px] w-[5px]"><path d="M5 .5v7L1 4z" fill="none" stroke="#222" /></svg></button>
                <button type="button" aria-label="Next tab"><svg viewBox="0 0 6 8" className="h-[6px] w-[5px]"><path d="M1 .5v7L5 4z" fill="none" stroke="#222" /></svg></button>
                <button type="button" aria-label="Close tab"><svg viewBox="0 0 16 16" className="size-[7px]">{ICONS.close}</svg></button>
              </div>
            </div>
          </section>
          <section aria-label="Notifications" className="mt-[3px] flex h-[127px] shrink-0 flex-col">
            <PanelHead title="User Notifications" />
            <div className="flex h-[13px] items-end pl-[1px]" role="tablist">
              <button type="button" role="tab" aria-selected="true" className="h-[13px] w-[57px] bg-white px-[3px] text-left whitespace-nowrap">User Notifications</button>
              <button type="button" role="tab" aria-selected="false" className="h-[11px] border-r border-[#d5d5d5] bg-[#eaeaea] px-[3px]">Alerts and Alarms</button>
            </div>
            <div className="flex h-[16px] items-center bg-gradient-to-b from-white to-[#ececec]">
              <div className="flex w-[103px] items-center pl-[4px]">
                <Items list="greyEdit saveGrey greyDoc greyCopy greyFind greySel" />
                <svg viewBox="0 0 6 4" aria-hidden="true" className="h-[2px] w-[4px] shrink-0"><path d="M0 0h6L3 4z" fill="#999" /></svg>
                <Items list="help" />
              </div>
            </div>
            <div className="mr-[4px] ml-[3px] h-[78px] border border-[#9a9a9a] bg-white">
              <table className="w-full table-fixed border-separate border-spacing-0">
                <thead>
                  <tr className="h-[17px]">
                    {COLS.map(([t, w, a], i) => (
                      <th key={i} scope="col" className={w + " " + a + " border-r border-[#e4e4e4] px-[4px] py-0 font-normal whitespace-nowrap last:border-r-0"}>{t}</th>
                    ))}
                  </tr>
                </thead>
              </table>
            </div>
          </section>
        </div>
      </main>

      <footer className="flex h-[12px] shrink-0 items-center border-t border-[#dedede] pl-[2px]">
        <span>25 elements selected</span>
        <span className="ml-auto flex w-[119px] items-center gap-[3px]"><Sep />X: 15.77 m, Y: -5.35 m</span>
        <span className="w-[62px] whitespace-nowrap">Zoom Level: 83.3 %</span>
        <span className="flex w-[41px] items-center gap-[3px]"><Sep /><Icon name="go" /></span>
        <span className="flex w-[20px] items-center gap-[3px]"><Sep /><Icon name="save" /></span>
        <span className="flex w-[19px]"><Sep /></span>
      </footer>

      <div className="flex h-[24px] shrink-0 items-center bg-[#1e3524] font-['Noto_Sans','Open_Sans',sans-serif] text-white">
        <button type="button" aria-label="Start" className="flex w-[29px] justify-center">
          <svg viewBox="0 0 12 12" className="size-[11px]" fill="#fff"><path d="M0 1.700 5.500 1v4.700H0zM6.200.900 12 0v5.700H6.200zM0 6.400h5.500v4.700L0 10.400zM6.200 6.400H12V12l-5.800-.9z" /></svg>
        </button>
        <label className="flex h-[23px] w-[206px] items-center bg-[#f2f2f2] pl-[7px]">
          <svg viewBox="0 0 12 12" aria-hidden="true" className="size-[10px]" fill="none" stroke="#333"><circle cx="7.300" cy="4.600" r="3.800" /><path d="M4.500 7.300.800 11.200" /></svg>
          <input aria-label="Search" placeholder="Type here to search" className="ml-[6px] w-[150px] bg-transparent text-[9px] text-[#333] outline-none placeholder:text-[#444]" />
        </label>
        <div className="flex h-full items-center">
          <button type="button" aria-label="Cortana" className="flex w-[29px] justify-center">
            <svg viewBox="0 0 12 12" className="size-[11px]"><circle cx="6" cy="6" r="4.700" fill="none" stroke="#fff" strokeWidth="1.600" /></svg>
          </button>
          <button type="button" aria-label="Task view" className="flex w-[29px] justify-center">
            <svg viewBox="0 0 12 12" className="size-[11px]" fill="none" stroke="#e8e8e8"><path d="M1.500 1v1.500h6V1M1.500 4.500h6v3.500h-6zM1.500 11.500V10h6v1.500M10 1v10" /><path d="M9 4h2v2H9z" fill="#fff" /></svg>
          </button>
          <button type="button" aria-label="Snipping tool" className="flex w-[30px] justify-center">
            <svg viewBox="0 0 16 14" className="h-[13px] w-[15px]"><ellipse cx="8" cy="5" rx="7" ry="4.200" fill="#e8e4e4" stroke="#b9a9a9" transform="rotate(-18 8 5)" /><path d="M4 7q4-1 7-5" stroke="#c86a6a" fill="none" /><path d="M9 7l3 6M13 7l-4 6" stroke="#3d86c8" strokeWidth="1.500" /></svg>
          </button>
          <button type="button" aria-label="Mail" className="flex w-[29px] justify-center">
            <svg viewBox="0 0 16 13" className="h-[13px] w-[15px]"><path d="M0 4.500 8 0l8 4.500V13H0z" fill="#1b75bb" /><path d="M2 4h12L8 9z" fill="#fff" /><path d="M0 4.500l8 5 8-5V13H0z" fill="#38b0f0" /></svg>
          </button>
          <button type="button" aria-label="Chrome" className="flex w-[30px] justify-center">
            <svg viewBox="0 0 16 16" className="size-[14px]"><circle cx="8" cy="8" r="7.500" fill="#f7c92e" /><path d="M8 .5A7.500 7.500 0 0 0 1.500 4.200L5 10l3-5.500h6.600A7.500 7.500 0 0 0 8 .5z" fill="#e2402f" /><path d="M1.500 4.200A7.500 7.500 0 0 0 7 15.400L10.500 10H5z" fill="#31a350" /><circle cx="8" cy="8" r="3.500" fill="#fff" /><circle cx="8" cy="8" r="2.700" fill="#3f80ea" /></svg>
          </button>
          <button type="button" aria-label="Media player" className="flex w-[29px] justify-center">
            <svg viewBox="0 0 14 14" className="size-[12px]"><path d="M4 1h9v12H4z" fill="#6fa9cc" /><path d="M1 1.500h9.500v11H1z" fill="#e9e9e9" stroke="#999" strokeWidth=".6" /><circle cx="6" cy="7" r="4" fill="#e88520" /><path d="M4.800 4.800 8.500 7 4.800 9.200z" fill="#fff" /></svg>
          </button>
          <button type="button" aria-label="Calculator" className="flex w-[29px] justify-center">
            <svg viewBox="0 0 12 14" className="h-[14px] w-[12px]"><path d="M.5 0h11v14H.5z" fill="#d7dde2" /><path d="M1.500 1h9v3.500h-9z" fill="#4aa3d8" /><path d="M2 6h2v2H2zM5 6h2v2H5zM8 6h2v2H8zM2 9h2v1.500H2zM5 9h2v1.500H5zM2 11.500h2V13H2zM5 11.500h2V13H5z" fill="#49606e" /><path d="M8 9h2.200v4H8z" fill="#2b7dc0" /></svg>
          </button>
          <button type="button" aria-label="WaterCAD" className="flex h-full w-[28px] items-center justify-center border-b border-[#8fb9d8] bg-[#4b5f51]">
            <svg viewBox="0 0 14 14" className="size-[13px]"><path d="M0 0h14v14H0z" fill="#142338" /><path d="M0 0h14v5L0 9z" fill="#2c4a73" /><path d="M2 9h10v2H2zM6 5h3v4H6zM4 4h7v1.500H4z" fill="#eef2f6" /></svg>
          </button>
          <button type="button" aria-label="Recorder" className="ml-[3px] flex h-full w-[26px] items-center justify-center border-b border-[#6fa8d4]">
            <svg viewBox="0 0 14 14" className="size-[14px]"><rect width="14" height="14" rx="2" fill="#c4161c" /><circle cx="7" cy="7" r="4.200" fill="none" stroke="#fff" strokeWidth="1.300" /><circle cx="7" cy="7" r="1.700" fill="#fff" /></svg>
          </button>
        </div>
        <div className="ml-auto flex h-full items-center">
          <svg viewBox="0 0 14 14" aria-hidden="true" className="mr-[54px] size-[14px]"><circle cx="6.500" cy="6.500" r="6" fill="#1f86b4" stroke="#d9edf5" /><path d="M4.500 5q.2-2 2.200-2t2 1.800q0 1.200-2 2V8M6.700 9v1.500" stroke="#fff" strokeWidth="1.300" fill="none" /><circle cx="12" cy="11.500" r="2" fill="#f0b62c" /></svg>
          <svg viewBox="0 0 12 12" aria-hidden="true" className="size-[12px]"><circle cx="6" cy="6" r="5.700" fill="#f6a81c" /><circle cx="5.500" cy="4.500" r="4" fill="#fbc648" /></svg>
          <span className="ml-[6px] w-[54px] text-[8px] whitespace-pre">54°F  Sunny</span>
          <span className="flex w-[57px] items-center justify-between pr-[4px]">
            <svg viewBox="0 0 8 5" aria-hidden="true" className="h-[5px] w-[8px]"><path d="M.5 4.500 4 1l3.500 3.500" fill="none" stroke="#fff" /></svg>
            <svg viewBox="0 0 8 10" aria-hidden="true" className="h-[10px] w-[8px]" fill="none" stroke="#e8e8e8"><path d="M2 .5h4M1.500 2.500h5v4h-5zM2 9.500h4M4 3.500v2" /></svg>
            <svg viewBox="0 0 10 9" aria-hidden="true" className="h-[9px] w-[10px]" fill="none" stroke="#e8e8e8"><path d="M3.500 1h6v5h-6zM.5 1.500v4h2M4 8.500h5M6.500 6v2.500" /></svg>
            <svg viewBox="0 0 10 8" aria-hidden="true" className="h-[8px] w-[10px]" fill="none" stroke="#e8e8e8"><path d="M.5 3h2l2-2v6l-2-2h-2zM6 2.500q1.200 1.500 0 3M7.800 1q2 3 0 6" /></svg>
          </span>
          <span className="flex w-[34px] flex-col items-center text-[7px] leading-[11px] whitespace-nowrap"><span>12:14 PM</span><span>10-Feb-22</span></span>
          <button type="button" aria-label="Notifications" className="flex w-[34px] justify-center">
            <svg viewBox="0 0 16 16" className="size-[16px]"><path d="M1 1h10v8H5.500L3.500 11V9H1z" fill="#fff" /><path d="M3 3.500h6M3 5.500h6" stroke="#1e3524" /><circle cx="11" cy="10.500" r="5" fill="#4b5f51" stroke="#889" strokeWidth=".5" /><text x="11" y="13" fontSize="7" textAnchor="middle" fill="#fff">10</text></svg>
          </button>
        </div>
      </div>

      <svg aria-hidden="true" viewBox="64 340 800 60" className="pointer-events-none absolute top-[340px] left-0 h-[60px] w-[800px] font-['Liberation_Sans',Arial,sans-serif]">
        {NODES.map(([x0, x, y, tx, label], i) => (
          <g key={label}>
            <path d={"M" + x0 + ".500 345 L" + x + " " + y} stroke="#a5203a" />
            <ellipse cx={x} cy={y} rx="4.300" ry="4.600" fill="#d6000c" />
            <text x={tx} y={LABEL_Y[i]} fontSize="8" fill="#8f1234">{label}</text>
          </g>
        ))}
      </svg>

      <section aria-label="Properties" className="absolute top-[72px] right-[22px] flex h-[476px] w-[188px] flex-col bg-[#f0f0f0] shadow-[1px_2px_6px_rgba(0,0,0,0.3)]">
        <header className="flex h-[18px] items-center justify-end bg-white pr-[1px]">
          <button type="button" aria-label="Close properties" className="h-[12px] w-[12px] bg-[#dedede] text-[#eee]" />
        </header>
        <div className="flex h-[22px] items-center justify-end pr-[4px]">
          <div className="relative flex h-[13px] w-[39px] items-center">
            <select aria-label="Zoom" className="h-full w-full appearance-none border border-[#999] bg-white pl-[2px]"><option>100%</option></select>
            <svg viewBox="0 0 8 5" aria-hidden="true" className="pointer-events-none absolute right-[3px] h-[4px] w-[6px]"><path d="M.5.500 4 4 7.500.500" fill="none" stroke="#444" /></svg>
          </div>
        </div>
        <p className="mt-[213px] pr-[19px] text-right">ic network.</p>
      </section>

      <FlexTable />

      <svg viewBox="0 0 8 12" aria-hidden="true" className="pointer-events-none absolute top-[328px] left-[673px] h-[12px] w-[8px]">
        <path d="M.5.500v9.500l2.200-2 1.500 3.500 1.500-.7L4.200 7.500h3z" fill="#fff" stroke="#222" strokeWidth=".8" />
      </svg>
    </div>
  </div>
);

export default App;
